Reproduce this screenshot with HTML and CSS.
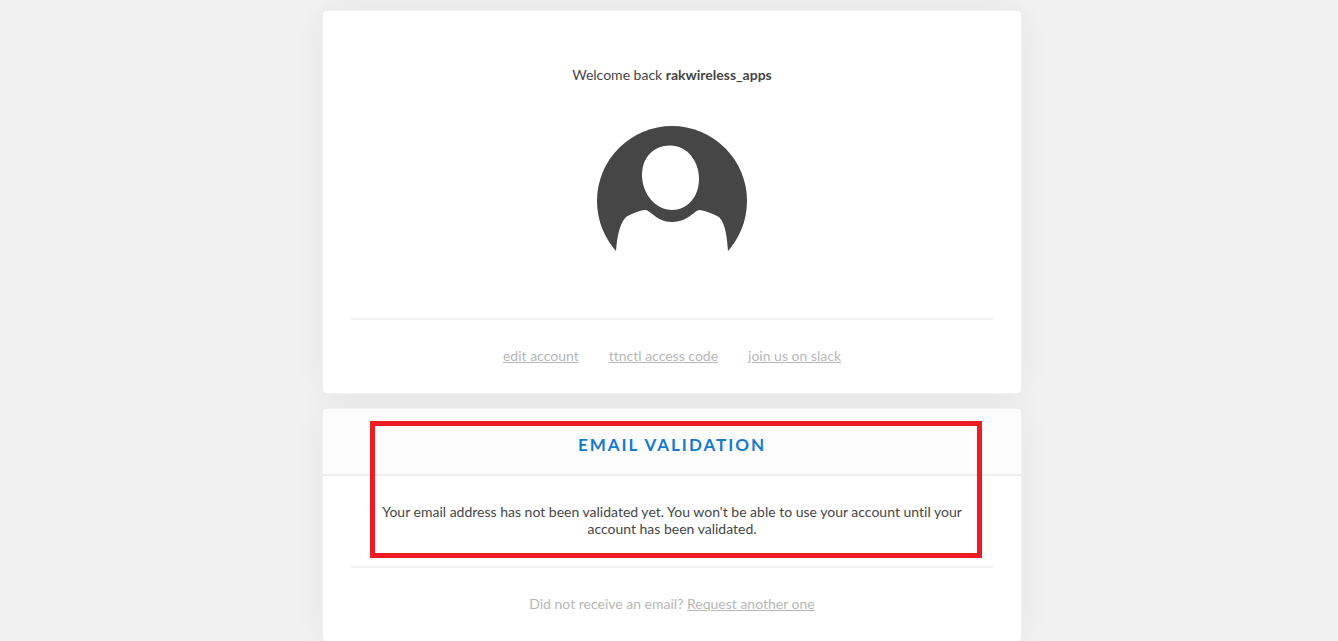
FILE: index.html
```html
<!DOCTYPE html>
<html lang="en">
<head>
<meta charset="utf-8">
<meta name="viewport" content="width=device-width, initial-scale=1">
<title>Account</title>
<link rel="stylesheet" href="styles.css">
</head>
<body>
<main class="page">
  <section class="card">
    <div class="profile">
      <p class="welcome">Welcome back <strong>rakwireless_apps</strong></p>
      <svg class="avatar" viewBox="0 0 150 150" role="img" aria-label="Profile picture">
        <circle cx="75" cy="75" r="75" fill="#464646"/>
        <path fill="#fff" d="M73 19.500C90 19.500 102 35 102 53C102 71 90 84 75 84C59 84 45 68 45 49C45 31 57 19.500 73 19.500Z"/>
        <path fill="#fff" d="M19 125C20 113 22 98 29 91C34 88 43 84 48 84C51 84 52 86 54 87C61 93 67 96 75 96C84 96 91 92 97 87C99 85 101 84 103 84C108 85 117 88 122 91C129 98 130 113 131 125L132 150H18Z"/>
      </svg>
    </div>
    <nav class="card-footer links">
      <a href="#">edit account</a>
      <a href="#">ttnctl access code</a>
      <a href="#">join us on slack</a>
    </nav>
  </section>
  <section class="card">
    <h2 class="card-title">Email validation</h2>
    <p class="message">Your email address has not been validated yet. You won't be able to use your account until your account has been validated.</p>
    <p class="card-footer">Did not receive an email? <a href="#">Request another one</a></p>
    <div class="highlight"></div>
  </section>
</main>
</body>
</html>
```
FILE: styles.css
```css
* {
  box-sizing: border-box;
}

body {
  margin: 0;
  background: #f1f1f1;
  color: #464646;
  font: 14px/17px Lato, sans-serif;
  font-variant-ligatures: none;
  text-align: center;
}

p,
h2 {
  margin: 0;
}

a {
  color: inherit;
  text-decoration: underline;
}

.page {
  display: flex;
  flex-direction: column;
  gap: 14px;
  max-width: 706px;
  margin: 0 auto;
  padding: 10px 0 0 6px;
  position: relative;
  z-index: 0;
}

.card {
  position: relative;
  background: #fff;
  background-clip: padding-box;
  border: 1px solid #f1f1f1;
  border-radius: 5px;
}

/* Shadows sit beneath every card so they never tint a neighbour. */
.card::before {
  content: "";
  position: absolute;
  inset: 0;
  z-index: -1;
  border-radius: 5px;
  box-shadow: 0 0 30px rgba(0, 0, 0, 0.06);
}

.profile {
  display: flex;
  flex-direction: column;
  align-items: center;
  gap: 43px;
  padding: 55px 28px 42px;
}

.avatar {
  display: block;
  width: 150px;
  height: 150px;
}

.card-footer {
  margin: 0 28px;
  padding: 27px 0 29px;
  border-top: 2px solid #f1f1f1;
  color: #b7b7b7;
}

.links {
  display: flex;
  flex-wrap: wrap;
  justify-content: center;
  gap: 30px;
}

.card-title {
  padding: 25px 28px 18px;
  background: #fcfcfc;
  border-bottom: 2px solid #eee;
  border-radius: 4px 4px 0 0;
  color: #147bcd;
  font-size: 17px;
  line-height: 22px;
  font-weight: 700;
  letter-spacing: 2px;
  text-transform: uppercase;
}

.message {
  padding: 27px 56px 29px;
}

.highlight {
  position: absolute;
  inset: 12px 39px 83px 47px;
  border: 5px solid #ed1c24;
  pointer-events: none;
}
```
